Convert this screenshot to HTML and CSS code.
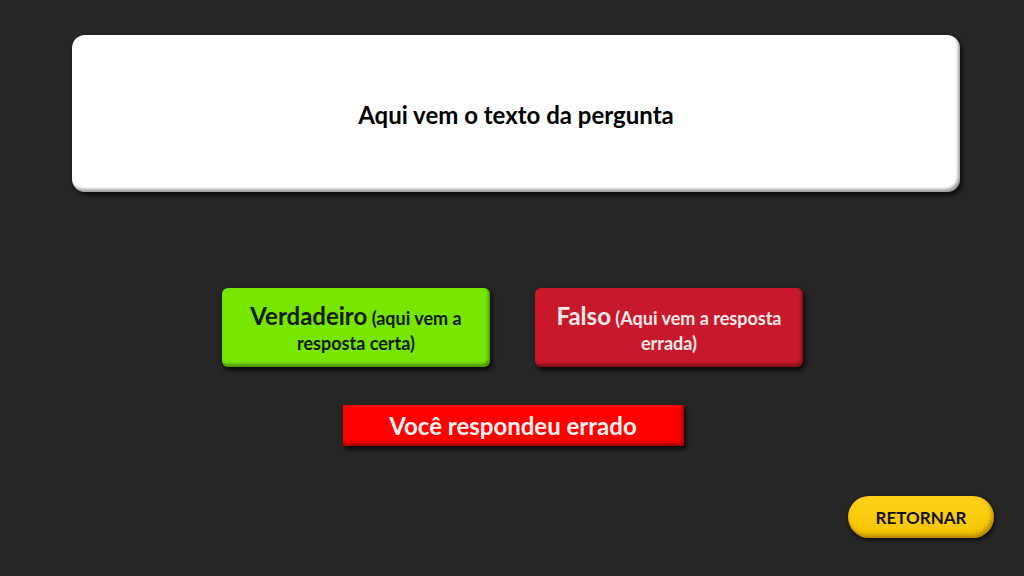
FILE: index.html
```html
<!DOCTYPE html>
<html lang="pt">
<head>
<meta charset="utf-8">
<title>Pergunta</title>
<link rel="stylesheet" href="styles.css">
</head>
<body>
<main class="slide">
  <section class="question">
    <p>Aqui vem o texto da pergunta</p>
  </section>
  <div class="answers">
    <button class="answer answer-true"><span class="big">Verdadeiro</span> <span class="small">(aqui vem a resposta certa)</span></button>
    <button class="answer answer-false"><span class="big">Falso</span> <span class="small">(Aqui vem a resposta errada)</span></button>
  </div>
  <div class="status">Você respondeu errado</div>
  <div class="footer">
    <button class="back">RETORNAR</button>
  </div>
</main>
</body>
</html>
```
FILE: styles.css
```css
html, body {
  margin: 0;
  padding: 0;
  background: #262626;
}
body {
  width: 1024px;
  height: 576px;
  overflow: hidden;
  font-family: "Lato", "Open Sans", "Liberation Sans", sans-serif;
  font-weight: 700;
}
.slide {
  display: flex;
  flex-direction: column;
  padding: 35px 0 0 0;
  box-sizing: border-box;
  height: 576px;
}
.question {
  margin-left: 72px;
  width: 888px;
  height: 157px;
  box-sizing: border-box;
  background: #ffffff;
  border-radius: 13px;
  box-shadow: inset -2px -3px 3px rgba(0,0,0,0.38), 2px 3px 5px rgba(0,0,0,0.7);
  display: flex;
  align-items: center;
  justify-content: center;
}
.question p {
  margin: 3px 0 0 0;
  font-size: 24px;
  color: #000;
  line-height: 1;
}
.answers {
  margin-top: 96px;
  display: flex;
  justify-content: center;
  gap: 45px;
  padding-left: 1px;
}
.answer {
  width: 268px;
  height: 79px;
  border: none;
  border-radius: 6px;
  font-family: inherit;
  font-weight: 700;
  font-size: 18px;
  line-height: 25px;
  padding: 3px 14px 0;
  text-align: center;
  box-shadow: inset -2px -3px 3px rgba(0,0,0,0.35), 2px 3px 5px rgba(0,0,0,0.8);
}
.answer .big {
  font-size: 24px;
}
.answer-true {
  background: #77e600;
  color: #0e1a00;
}
.answer-false {
  background: #c8192b;
  color: #fbeaea;
  padding: 3px 12px 0;
}
.status {
  margin: 38px auto 0;
  width: 341px;
  height: 41px;
  box-sizing: border-box;
  background: #ff0000;
  color: #fff3f3;
  font-size: 24px;
  display: flex;
  align-items: center;
  justify-content: center;
  position: relative;
  left: 1px;
  box-shadow: inset -2px -3px 3px rgba(0,0,0,0.35), 2px 3px 4px rgba(0,0,0,0.8);
}
.footer {
  margin-top: 50px;
  display: flex;
  justify-content: flex-end;
  padding-right: 30px;
}
.back {
  width: 146px;
  height: 42px;
  border: none;
  border-radius: 21px;
  background: linear-gradient(#ffd21a, #f5c400);
  color: #111;
  font-family: inherit;
  font-weight: 700;
  font-size: 17px;
  box-shadow: inset -2px -3px 4px rgba(120,80,0,0.55), 1px 2px 4px rgba(0,0,0,0.8);
}
```
